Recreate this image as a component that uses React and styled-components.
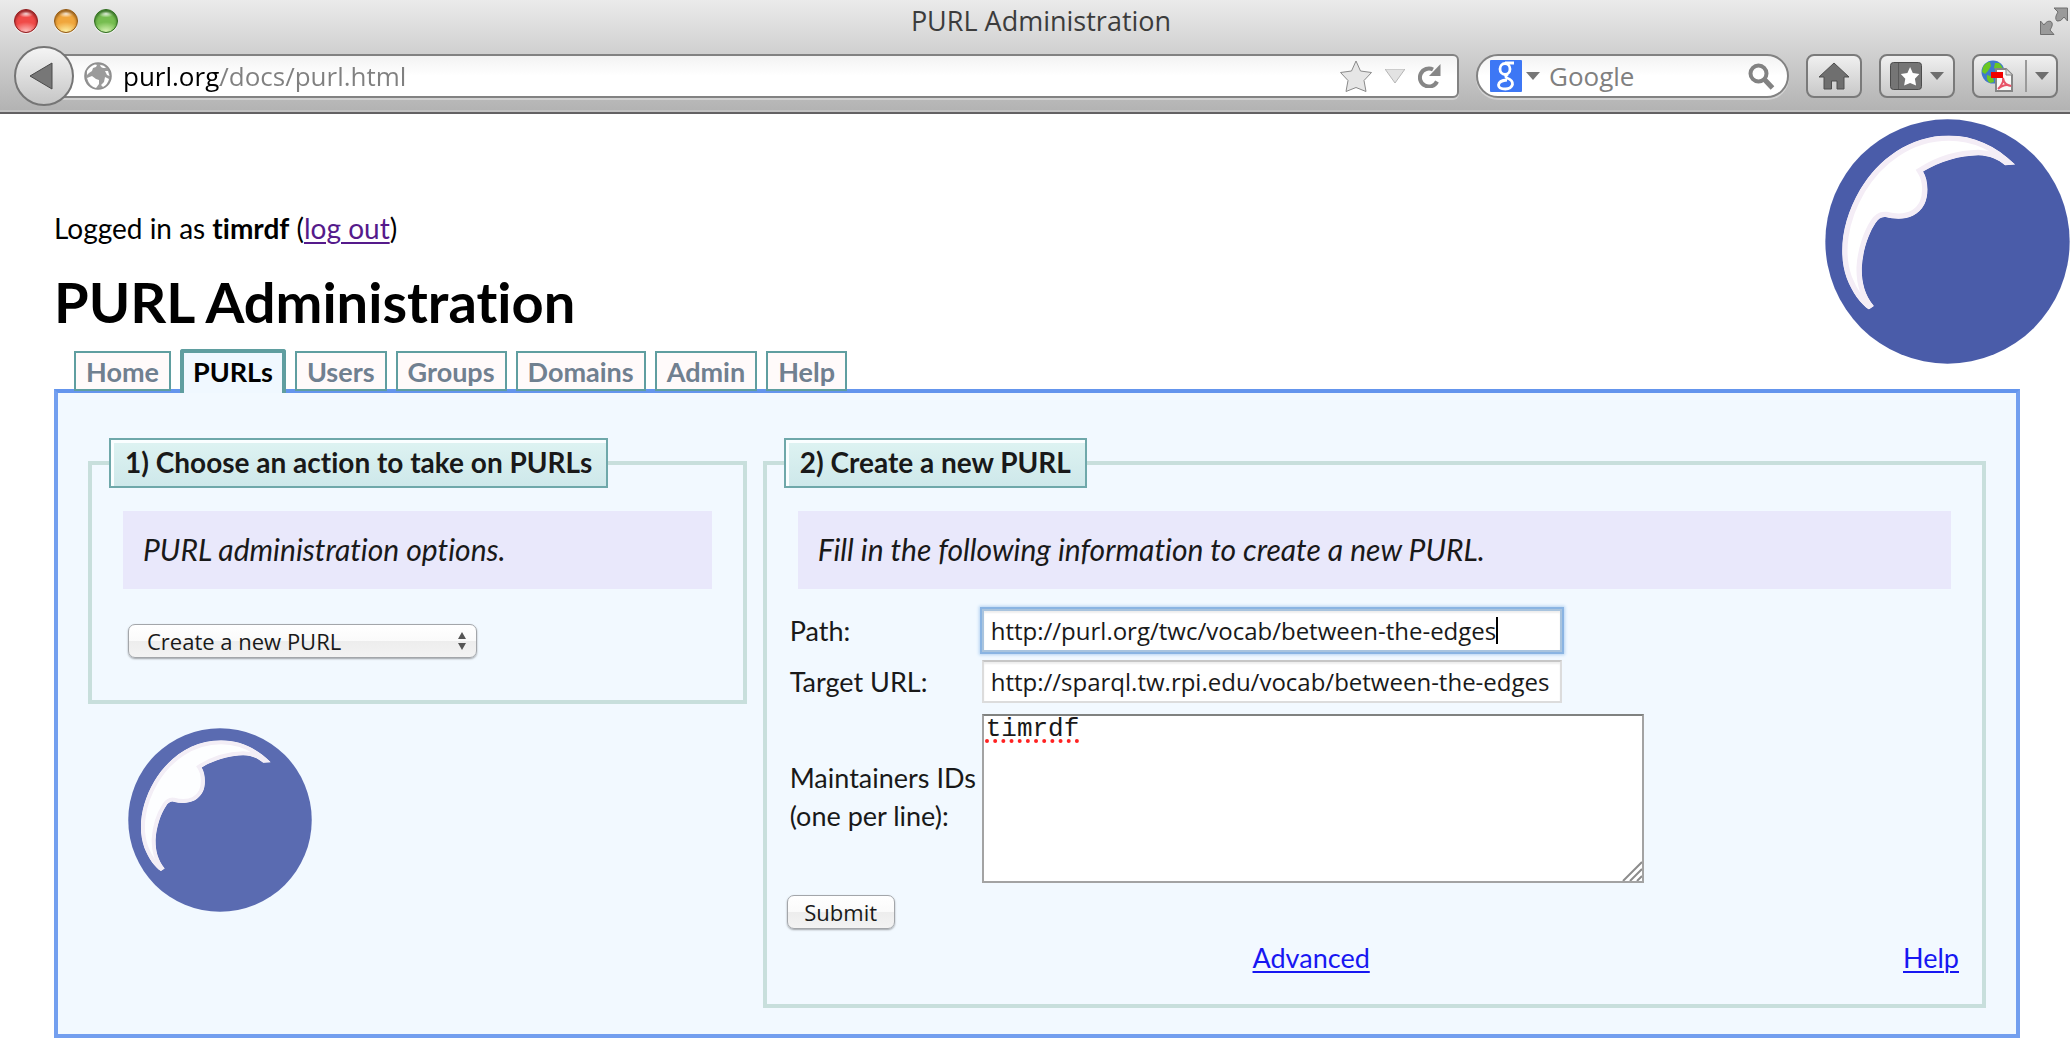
import React, { useId } from "react";
import styled, { createGlobalStyle, css } from "styled-components";

const bodyFont = `Lato, "Open Sans", sans-serif`;
const uiFont = `"Open Sans", "Noto Sans", sans-serif`;

const GlobalStyle = createGlobalStyle`
  *, *::before, *::after { box-sizing: border-box; }
  body {
    margin: 0;
    background: #fff;
    color: #000;
    font-family: ${bodyFont};
    font-size: 28px;
    line-height: 34px;
    font-variant-ligatures: none;
  }
  button, input, select, textarea { margin: 0; font: inherit; color: inherit; }
`;

/* ---------- browser window ---------- */

const Chrome = styled.header`
  border-bottom: 2px solid #636163;
  background: linear-gradient(#ebebeb, #d0d0d0 48%, #b2b2b2);
  box-shadow: inset 0 -2px 0 #c2c2c2;
  font-family: ${uiFont};
`;

const TitleBar = styled.div`
  display: grid;
  grid-template-columns: 1fr auto 1fr;
  align-items: center;
  height: 41px;
  padding: 0 2px 0 14px;
`;

const Lights = styled.div`
  display: flex;
  gap: 16px;
`;

const Light = styled.button`
  width: 24px;
  height: 24px;
  padding: 0;
  border: 1px solid ${(p) => p.$edge};
  border-radius: 50%;
  background:
    radial-gradient(ellipse 8px 4px at 50% 16%, rgba(255, 255, 255, 0.9), transparent),
    radial-gradient(ellipse 14px 10px at 50% 100%, ${(p) => p.$glow}, transparent),
    ${(p) => p.$color};
  box-shadow: inset 0 2px 3px ${(p) => p.$edge}, 0 1px 0 rgba(255, 255, 255, 0.6);
`;

const WindowTitle = styled.div`
  font-size: 27px;
  line-height: 38px;
  color: #3c3c3c;
`;

const PlainButton = styled.button`
  display: flex;
  flex: none;
  padding: 0;
  border: 0;
  background: none;
`;

const TitleEnd = styled.div`
  display: flex;
  justify-content: flex-end;
`;

const ToolBar = styled.div`
  display: flex;
  align-items: center;
  gap: 17px;
  padding: 5px 12px 6px 14px;
`;

const Location = styled.div`
  display: flex;
  flex: 1;
  align-items: center;
`;

const BackButton = styled.button`
  display: grid;
  flex: none;
  place-items: center;
  position: relative;
  z-index: 1;
  width: 60px;
  height: 60px;
  padding: 0 6px 0 0;
  border: 2px solid #757575;
  border-radius: 50%;
  background: linear-gradient(#f4f4f4, #c6c6c6);
`;

const fieldBox = css`
  display: flex;
  align-items: center;
  height: 44px;
  border: 2px solid #828282;
  background: linear-gradient(#f3f3f3, #fff 50%);
  box-shadow: 0 2px 0 rgba(255, 255, 255, 0.35);
`;

const UrlBox = styled.div`
  ${fieldBox}
  flex: 1;
  margin-left: -30px;
  padding: 0 16px 0 38px;
  border-radius: 0 6px 6px 0;
`;

const UrlInput = styled.input`
  flex: 1;
  min-width: 0;
  margin-left: 11px;
  padding: 0;
  border: 0;
  outline: 0;
  font-size: 26px;
  line-height: 36px;
  color: transparent;
  background: linear-gradient(90deg, #000 97px, #808080 97px);
  background-clip: text;
`;

const UrlTools = styled.div`
  display: flex;
  align-items: center;
  gap: 13px;
`;

const SearchBox = styled.form`
  ${fieldBox}
  flex: none;
  width: 313px;
  padding: 0 12px;
  border-radius: 22px;
`;

const SearchInput = styled.input`
  flex: 1;
  min-width: 0;
  margin-left: 9px;
  padding: 0;
  border: 0;
  outline: 0;
  background: none;
  font-size: 26px;
  line-height: 36px;
  &::placeholder { color: #808080; opacity: 1; }
`;

const ToolButton = styled.button`
  display: flex;
  flex: none;
  align-items: center;
  justify-content: center;
  gap: 8px;
  width: ${(p) => p.$width}px;
  height: 44px;
  padding: 0;
  border: 2px solid #7a7a7a;
  border-radius: 8px;
  background: linear-gradient(#f0f0f0, #c8c8c8);
`;

const Divider = styled.span`
  width: 2px;
  height: 32px;
  margin-left: 4px;
  background: #9a9a9a;
`;

/* ---------- page ---------- */

const Page = styled.main`
  padding-left: 54px;
`;

const Masthead = styled.div`
  display: flex;
  align-items: flex-start;
  justify-content: space-between;
`;

const Identity = styled.div`
  padding: 97px 0 14px;
`;

const Session = styled.p`
  margin: 0 0 24px;
`;

const Link = styled.a`
  color: ${(p) => (p.$visited ? "#551a8b" : "#1717f2")};
  text-decoration: underline;
  text-decoration-thickness: 2px;
  text-underline-offset: 3px;
`;

const Heading = styled.h1`
  margin: 0;
  font-size: 56px;
  line-height: 66px;
`;

const MastheadLogo = styled.div`
  display: flex;
  margin: 5px 0 -16px;
`;

const Tabs = styled.nav`
  display: flex;
  align-items: flex-end;
  gap: 9px;
  position: relative;
  z-index: 1;
  margin-bottom: -4px;
  padding-left: 20px;
`;

const Tab = styled.a`
  margin-bottom: 2px;
  padding: 3px 10px 1px;
  border: 2px solid #5f9ea0;
  background: #fffafa;
  color: #708090;
  font-size: 27px;
  font-weight: bold;
  line-height: 32px;
  text-decoration: none;
  ${(p) =>
    p.$active &&
    css`
      margin-bottom: 0;
      padding: 3px 9px 5px;
      border-width: 4px 4px 0;
      border-radius: 3px 3px 0 0;
      background: #f0f8ff;
      color: #000;
    `}
`;

const Panel = styled.div`
  display: grid;
  grid-template-columns: 35fr 65fr;
  gap: 16px;
  margin-right: 50px;
  padding: 45px 30px 26px;
  border: 4px solid #739fef;
  border-top-color: #6495ed;
  background: #f2f9ff;
  color: #191919;
`;

const Group = styled.fieldset`
  min-width: 0;
  margin: 0;
  padding: 0 17px;
  border: 4px solid #c8dfdc;
`;

const Legend = styled.legend`
  padding: 5px 14px 7px;
  border: 2px solid #6fa8aa;
  background: linear-gradient(#def3f2, #cee8ea);
  box-shadow: inset 3px 3px 0 #fafeff;
  font-weight: bold;
`;

const Hint = styled.p`
  margin: 23px 14px 0;
  padding: 20px 20px 22px;
  background: #e9e8fb;
  font-size: 30px;
  font-style: italic;
  line-height: 36px;
`;

const SelectWrap = styled.div`
  display: flex;
  position: relative;
  width: 349px;
  margin: 35px 19px 42px;
`;

const raised = css`
  border: 1px solid #a3a6aa;
  border-radius: 7px;
  background: linear-gradient(#fff 0, #fafafa 50%, #ededed 51%, #f3f3f3);
  box-shadow: 0 1px 2px rgba(0, 0, 0, 0.35);
  font-family: ${uiFont};
  font-size: 22px;
  line-height: 32px;
`;

const Select = styled.select`
  ${raised}
  appearance: none;
  width: 100%;
  height: 34px;
  padding: 0 40px 0 18px;
`;

const SelectArrows = styled.svg`
  position: absolute;
  top: 7px;
  right: 10px;
  pointer-events: none;
`;

const SideLogo = styled.div`
  display: flex;
  padding: 24px 40px 0;
  opacity: 0.9;
`;

const PurlForm = styled.form`
  margin: 20px 3px 29px;
`;

const Fields = styled.div`
  display: grid;
  grid-template-columns: 192px 1fr;
  align-items: center;
  row-gap: 8px;
  padding-left: 3px;
`;

const Label = styled.label`
  font-size: 27px;
  line-height: 38px;
`;

const Control = styled.div`
  display: flex;
  justify-self: start;
  position: relative;
  max-width: 100%;
`;

const TextInput = styled.input`
  width: 580px;
  height: 43px;
  padding: 0 7px;
  border: 2px solid #dcdcdc;
  border-top-color: #c6c6c6;
  outline: 0;
  background: #fff;
  box-shadow: inset 0 2px 2px #eee;
  font-family: ${uiFont};
  font-size: 24px;
  ${(p) =>
    p.$focused &&
    css`
      border-color: #a9c4de;
      box-shadow: 0 0 0 2px #8ab4e2, 0 0 3px 3px #b5d3f2, inset 0 2px 2px #eee;
    `}
`;

const Caret = styled.span`
  position: absolute;
  top: 8px;
  left: 514px;
  width: 2px;
  height: 27px;
  background: #000;
`;

const TextArea = styled.textarea`
  width: 662px;
  height: 169px;
  margin-top: 3px;
  padding: 0 2px;
  border: 2px solid #a3a3a3;
  border-top-color: #808280;
  outline: 0;
  resize: none;
  background: #fff;
  font-family: "Liberation Mono", monospace;
  font-size: 26px;
  line-height: 26px;
  text-decoration: underline dotted #f22 4px;
  text-underline-offset: 3px;
  text-decoration-skip-ink: none;
`;

const Grip = styled.svg`
  position: absolute;
  right: 2px;
  bottom: 2px;
`;

const Submit = styled.button`
  ${raised}
  display: block;
  width: 108px;
  height: 34px;
  margin: 12px 0;
  padding: 0;
`;

const FormLinks = styled.div`
  display: grid;
  grid-template-columns: 17fr 2fr;
  padding-right: 3px;
  font-size: 27px;
  text-align: center;
`;

const HelpCell = styled.div`
  text-align: right;
`;

/* ---------- drawings ---------- */

const GLINT =
  "M645 195C588 138 520 108 447 108C330 108 235 180 182 270C128 362 115 460 142 535C158 577 184 613 208 628L223 618C194 582 186 544 187 502C190 450 208 400 228 370Q240 350 258 352C300 362 350 360 374 314C388 285 385 240 370 216C420 185 480 168 535 167C570 168 595 180 615 197Z";

function Ball({ size }) {
  const id = useId();
  return (
    <svg width={size} height={size} viewBox="77 59 732 732" aria-hidden="true">
      <clipPath id={id}>
        <path d={GLINT} />
      </clipPath>
      <circle cx="443" cy="425" r="365" fill="#4a5ca9" />
      <path d={GLINT} fill="#fff" stroke="#f4edf6" strokeWidth="32" clipPath={`url(#${id})`} />
    </svg>
  );
}

const Triangle = ({ w = 14, h = 8, fill = "#6e6e6e", stroke = "none" }) => (
  <svg width={w} height={h} viewBox={`0 0 ${w} ${h}`} aria-hidden="true">
    <path d={`M0 0H${w}L${w / 2} ${h}Z`} fill={fill} stroke={stroke} />
  </svg>
);

const STAR = "M16 1L20.5 11L31.5 12.5L24 20.5L26 31.5L16 27.5L6 31.5L8 20.5L.5 12.5L11.500 11Z";

const SiteGlobe = () => (
  <svg width="28" height="28" viewBox="0 0 28 28" aria-hidden="true">
    <circle cx="14" cy="14" r="13" fill="#9b9b9b" stroke="#8e8e8e" strokeWidth="1.600" />
    <path d="M3 9Q6 4 11 2.500L13 3L12 5L9 6L8 9L5 11L3 13Z M3 16L8 14L12 17L15 18L15 22L12 26Q5 24 3 16Z M16 3Q20 3 22 6L19 6L17 5Z M21 9L24 9L25.500 14L23 13Z M21 15L25 17Q24 22 19 25L17 23L20 20Z" fill="#fff" />
  </svg>
);

const Reload = () => (
  <svg width="23" height="24" viewBox="0 0 23 24" aria-hidden="true">
    <path d="M19 17.500A9 9 0 1 1 15 5.500" fill="none" stroke="#868686" strokeWidth="4" />
    <path d="M22.500 0V12H11Z" fill="#868686" />
  </svg>
);

const GoogleMark = () => (
  <svg width="32" height="32" viewBox="0 0 32 32" aria-hidden="true">
    <rect width="32" height="32" rx="1" fill="#3d77f5" />
    <g fill="none" stroke="#fff" strokeWidth="2.800">
      <ellipse cx="15" cy="9" rx="5" ry="5.500" />
      <path d="M15 3H24M18 14Q14 16 17 18Q23 20 22.500 24.500Q21 29 15.500 29Q8.500 29 8.500 25Q9 20.500 17 20" />
    </g>
  </svg>
);

const Magnifier = () => (
  <svg width="27" height="27" viewBox="0 0 27 27" aria-hidden="true">
    <circle cx="10.500" cy="10.500" r="8" fill="none" stroke="#828282" strokeWidth="4" />
    <path d="M16 16L24.500 25" stroke="#828282" strokeWidth="5" />
  </svg>
);

const House = () => (
  <svg width="32" height="28" viewBox="0 0 32 28" aria-hidden="true">
    <path d="M16 1L31 15H26V27H19V19H13.500V27H6V15H1Z" fill="#6f6f6f" stroke="#4e4e4e" />
  </svg>
);

const BookmarkBook = () => (
  <svg width="32" height="29" viewBox="0 0 32 29" aria-hidden="true">
    <rect x=".5" y=".5" width="31" height="27" rx="3" fill="#757575" stroke="#4c4c4c" />
    <path d="M8.500 1V27" stroke="#5a5a5a" />
    <path d={STAR} fill="#fff" transform="translate(10.500 4.500) scale(.6)" />
  </svg>
);

const PdfGlobe = () => (
  <svg width="32" height="32" viewBox="0 0 32 32" aria-hidden="true">
    <circle cx="12" cy="12" r="11.500" fill="#3f78cc" />
    <path d="M2 7Q5 2 9 2L10 6L7 11L4 14L1 12ZM14 3L18 3Q22 7 22 10L17 12L13 8ZM6 15L12 17L13 22L9 23Q5 20 6 15Z" fill="#6bc722" />
    <path d="M15 9H25L31 15V31H15Z" fill="#fafafa" stroke="#858585" strokeWidth="2" />
    <path d="M25 9V15H31" fill="#ddd" stroke="#858585" />
    <rect x="10" y="12" width="12" height="6" fill="#f20000" />
    <path d="M17 29Q23 23 22 18Q23 25 30 26Q24 23 17 29" fill="none" stroke="#e8556a" strokeWidth="2" />
  </svg>
);

const Expand = () => (
  <svg width="28" height="28" viewBox="0 0 28 28" aria-hidden="true">
    <g fill="#9a9a9a" stroke="#6f6f6f">
      <path d="M14 1H27.500V14L24 10Q21 15 17 14Q14 11 18 5Z" />
      <path d="M.5 14L4 18Q7 13 11 14.500Q14 17 10 23L14 27.500H.5Z" />
    </g>
  </svg>
);

const TABS = ["Home", "PURLs", "Users", "Groups", "Domains", "Admin", "Help"];

export default function App() {
  return (
    <>
      <GlobalStyle />
      <Chrome>
        <TitleBar>
          <Lights>
            <Light aria-label="Close" $color="#f04a48" $edge="#8c1d1f" $glow="#ffc4c4" />
            <Light aria-label="Minimize" $color="#f0a63c" $edge="#8f5715" $glow="#fff4a8" />
            <Light aria-label="Zoom" $color="#76bd50" $edge="#2f6a20" $glow="#dcf7b8" />
          </Lights>
          <WindowTitle>PURL Administration</WindowTitle>
          <TitleEnd>
            <PlainButton aria-label="Full screen"><Expand /></PlainButton>
          </TitleEnd>
        </TitleBar>
        <ToolBar>
          <Location>
            <BackButton aria-label="Back">
              <svg width="24" height="28" viewBox="0 0 24 28" aria-hidden="true">
                <path d="M1 14L23 1V27Z" fill="#777" stroke="#4a4a4a" />
              </svg>
            </BackButton>
            <UrlBox>
              <SiteGlobe />
              <UrlInput aria-label="Address" defaultValue="purl.org/docs/purl.html" />
              <UrlTools>
                <PlainButton aria-label="Bookmark this page">
                  <svg width="32" height="33" viewBox="0 0 32 33" aria-hidden="true">
                    <path d={STAR} fill="#e6e6e6" stroke="#8a8a8a" strokeLinejoin="round" />
                  </svg>
                </PlainButton>
                <PlainButton aria-label="History">
                  <Triangle w={20} h={14} fill="#e2e2e2" stroke="#b5b5b5" />
                </PlainButton>
                <PlainButton aria-label="Reload"><Reload /></PlainButton>
              </UrlTools>
            </UrlBox>
          </Location>
          <SearchBox>
            <GoogleMark />
            <PlainButton type="button" aria-label="Search engine">
              <svg width="18" height="8" viewBox="0 0 18 8" aria-hidden="true">
                <path d="M4 0H18L11 8Z" fill="#777" />
              </svg>
            </PlainButton>
            <SearchInput aria-label="Search" placeholder="Google" />
            <PlainButton aria-label="Search"><Magnifier /></PlainButton>
          </SearchBox>
          <ToolButton $width={56} aria-label="Home page"><House /></ToolButton>
          <ToolButton $width={76} aria-label="Bookmarks"><BookmarkBook /><Triangle /></ToolButton>
          <ToolButton $width={86} aria-label="Save as PDF"><PdfGlobe /><Divider /><Triangle /></ToolButton>
        </ToolBar>
      </Chrome>

      <Page>
        <Masthead>
          <Identity>
            <Session>
              Logged in as <b>timrdf</b> (<Link href="#logout" $visited>log out</Link>)
            </Session>
            <Heading>PURL Administration</Heading>
          </Identity>
          <MastheadLogo><Ball size={245} /></MastheadLogo>
        </Masthead>

        <Tabs>
          {TABS.map((name) => (
            <Tab key={name} href={`#${name}`} $active={name === "PURLs"}>{name}</Tab>
          ))}
        </Tabs>

        <Panel>
          <div>
            <Group>
              <Legend>1) Choose an action to take on PURLs</Legend>
              <Hint>PURL administration options.</Hint>
              <SelectWrap>
                <Select aria-label="Action">
                  <option>Create a new PURL</option>
                </Select>
                <SelectArrows width="10" height="20" viewBox="0 0 10 20" aria-hidden="true">
                  <path d="M5 1L9 8H1ZM5 19L9 12H1Z" fill="#555" />
                </SelectArrows>
              </SelectWrap>
            </Group>
            <SideLogo><Ball size={184} /></SideLogo>
          </div>

          <Group>
            <Legend>2) Create a new PURL</Legend>
            <Hint>Fill in the following information to create a new PURL.</Hint>
            <PurlForm>
              <Fields>
                <Label htmlFor="path">Path:</Label>
                <Control>
                  <TextInput id="path" $focused defaultValue="http://purl.org/twc/vocab/between-the-edges" />
                  <Caret />
                </Control>
                <Label htmlFor="target">Target URL:</Label>
                <Control>
                  <TextInput id="target" defaultValue="http://sparql.tw.rpi.edu/vocab/between-the-edges" />
                </Control>
                <Label htmlFor="maintainers">Maintainers IDs<br />(one per line):</Label>
                <Control>
                  <TextArea id="maintainers" spellCheck={false} defaultValue="timrdf" />
                  <Grip width="20" height="21" viewBox="0 0 20 21" aria-hidden="true">
                    <path d="M1 21L20 2M8 21L20 9M15 21L20 16" stroke="#8c8c8c" strokeWidth="2" />
                  </Grip>
                </Control>
              </Fields>
              <Submit type="submit">Submit</Submit>
              <FormLinks>
                <div><Link href="#advanced">Advanced</Link></div>
                <HelpCell><Link href="#help">Help</Link></HelpCell>
              </FormLinks>
            </PurlForm>
          </Group>
        </Panel>
      </Page>
    </>
  );
}
